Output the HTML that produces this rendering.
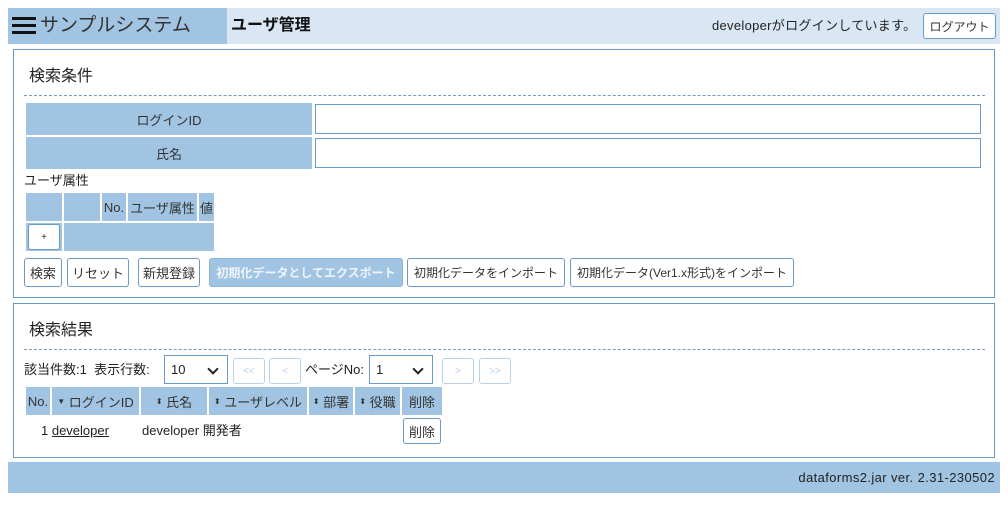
<!DOCTYPE html>
<html><head><meta charset="utf-8"><style>
*{box-sizing:border-box;margin:0;padding:0}
body{width:1008px;height:512px;background:#fff;font-family:"Liberation Sans","Noto Sans CJK JP",sans-serif;font-size:13px;color:#222;position:relative;overflow:hidden}
.a{position:absolute;white-space:nowrap}
.th{position:absolute;background:#a0c4e2;display:flex;align-items:center;justify-content:center;font-size:13px;color:#333;white-space:nowrap}
.btn{position:absolute;border:1px solid #6a9acb;border-radius:3px;background:#fff;display:flex;align-items:center;justify-content:center;font-size:13px;color:#333;white-space:nowrap;overflow:hidden}
.inp{position:absolute;border:1px solid #6a9acb;background:#fff}
.dis{border-color:#b9d1e8;color:#b9d1e8;font-size:10px}
.dash{position:absolute;border-top:1px dashed #7a9ab8;height:0}
.sel{position:absolute;border:1px solid #6a9acb;background:#fff;font-size:13px;padding-left:6px;display:flex;align-items:center}
.sel:after{content:"";position:absolute;right:10px;top:9px;width:6px;height:6px;border-right:2px solid #222;border-bottom:2px solid #222;transform:rotate(45deg)}
</style></head><body>
<div class="a" style="left:8px;top:8px;width:219px;height:36px;background:#a0c4e2"></div>
<div class="a" style="left:227px;top:8px;width:773px;height:36px;background:#d9e7f4"></div>
<div class="a" style="left:12px;top:17px;width:24px;height:3px;background:#111"></div>
<div class="a" style="left:12px;top:24px;width:24px;height:3px;background:#111"></div>
<div class="a" style="left:12px;top:31px;width:24px;height:3px;background:#111"></div>
<div class="a" style="left:40px;top:14px;font-size:19px;color:#333;line-height:24px">サンプルシステム</div>
<div class="a" style="left:231px;top:15px;font-size:16px;font-weight:bold;color:#111;line-height:22px">ユーザ管理</div>
<div class="a" style="left:712px;top:17px;font-size:13px;line-height:18px;letter-spacing:0.3px">developerがログインしています。</div>
<div class="btn" style="left:923px;top:13px;width:73px;height:26px;font-size:12px">ログアウト</div>

<div class="a" style="left:13px;top:49px;width:982px;height:249px;border:1px solid #6a9acb"></div>
<div class="a" style="left:29px;top:66px;font-size:16px;line-height:22px">検索条件</div>
<div class="dash" style="left:24px;top:95px;width:961px"></div>
<div class="th" style="left:26px;top:103px;width:286px;height:32px">ログインID</div>
<div class="inp" style="left:315px;top:104px;width:666px;height:30px"></div>
<div class="th" style="left:26px;top:137px;width:286px;height:32px">氏名</div>
<div class="inp" style="left:315px;top:138px;width:666px;height:30px"></div>
<div class="a" style="left:24px;top:172px;line-height:18px">ユーザ属性</div>
<div class="th" style="left:26px;top:193px;width:36px;height:28px"></div>
<div class="th" style="left:64px;top:193px;width:36px;height:28px"></div>
<div class="th" style="left:102px;top:193px;width:24px;height:28px">No.</div>
<div class="th" style="left:128px;top:193px;width:69px;height:28px">ユーザ属性</div>
<div class="th" style="left:199px;top:193px;width:15px;height:28px">値</div>
<div class="th" style="left:26px;top:223px;width:36px;height:28px"></div>
<div class="btn" style="left:28px;top:224px;width:32px;height:26px;font-size:10px">+</div>
<div class="th" style="left:64px;top:223px;width:150px;height:28px"></div>
<div class="btn" style="left:24px;top:258px;width:38px;height:29px">検索</div>
<div class="btn" style="left:67px;top:258px;width:62px;height:29px">リセット</div>
<div class="btn" style="left:138px;top:258px;width:62px;height:29px">新規登録</div>
<div class="btn" style="left:209px;top:258px;width:194px;height:29px;background:#a0c4e2;border-color:#8db5da;color:#eef4fa;font-weight:bold;font-size:12px">初期化データとしてエクスポート</div>
<div class="btn" style="left:407px;top:258px;width:158px;height:29px;font-size:12px">初期化データをインポート</div>
<div class="btn" style="left:570px;top:258px;width:224px;height:29px;font-size:12px">初期化データ(Ver1.x形式)をインポート</div>

<div class="a" style="left:13px;top:303px;width:982px;height:155px;border:1px solid #6a9acb"></div>
<div class="a" style="left:29px;top:320px;font-size:16px;line-height:22px">検索結果</div>
<div class="dash" style="left:24px;top:349px;width:961px"></div>
<div class="a" style="left:24px;top:361px;line-height:18px">該当件数:1&nbsp; 表示行数:</div>
<div class="sel" style="left:164px;top:355px;width:64px;height:29px">10</div>
<div class="btn dis" style="left:233px;top:358px;width:32px;height:26px">&lt;&lt;</div>
<div class="btn dis" style="left:269px;top:358px;width:32px;height:26px">&lt;</div>
<div class="a" style="left:305px;top:361px;line-height:18px">ページNo:</div>
<div class="sel" style="left:369px;top:355px;width:64px;height:29px">1</div>
<div class="btn dis" style="left:442px;top:358px;width:32px;height:26px">&gt;</div>
<div class="btn dis" style="left:479px;top:358px;width:32px;height:26px">&gt;&gt;</div>
<div class="th" style="left:26px;top:387px;width:24px;height:28px">No.</div>
<div class="th" style="left:52px;top:387px;width:87px;height:28px"><span style="font-size:8px">▼</span>&nbsp;ログインID</div>
<div class="th" style="left:141px;top:387px;width:66px;height:28px"><span style="font-size:8px">⬍</span>&nbsp;氏名</div>
<div class="th" style="left:209px;top:387px;width:98px;height:28px"><span style="font-size:8px">⬍</span>&nbsp;ユーザレベル</div>
<div class="th" style="left:309px;top:387px;width:44px;height:28px"><span style="font-size:8px">⬍</span>&nbsp;部署</div>
<div class="th" style="left:355px;top:387px;width:45px;height:28px"><span style="font-size:8px">⬍</span>&nbsp;役職</div>
<div class="th" style="left:402px;top:387px;width:40px;height:28px">削除</div>
<div class="a" style="left:41px;top:422px;line-height:18px">1 <span style="text-decoration:underline">developer</span></div>
<div class="a" style="left:142px;top:422px;line-height:18px">developer 開発者</div>
<div class="btn" style="left:403px;top:418px;width:38px;height:26px">削除</div>

<div class="a" style="left:8px;top:462px;width:992px;height:31px;background:#a0c4e2"></div>
<div class="a" style="left:700px;top:469px;width:295px;text-align:right;line-height:18px;color:#222;letter-spacing:0.4px">dataforms2.jar ver. 2.31-230502</div>
</body></html>
